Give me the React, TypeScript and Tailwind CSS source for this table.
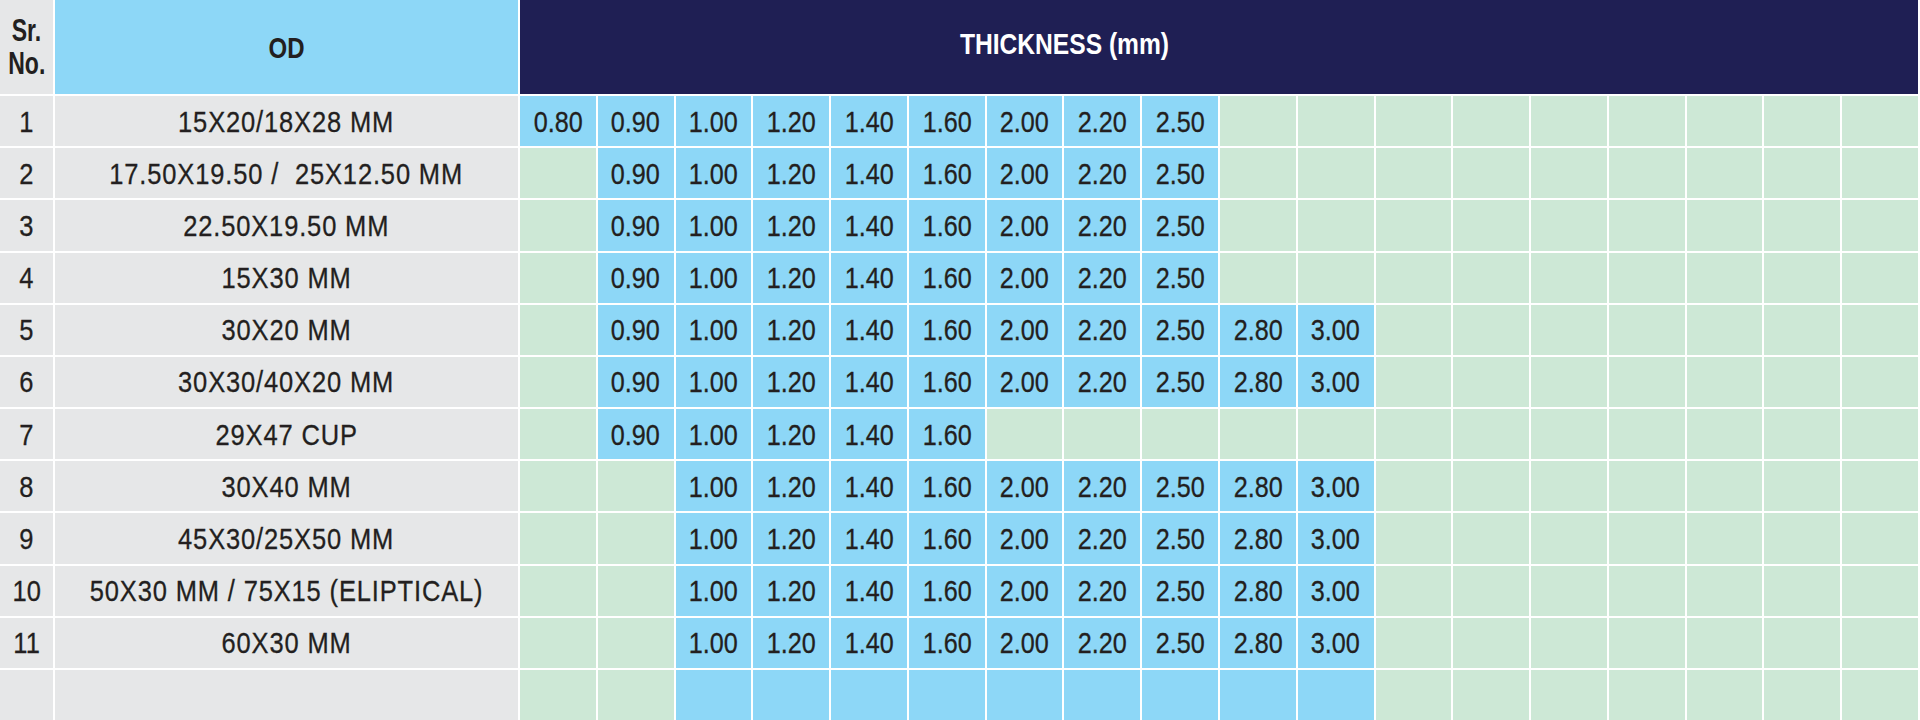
const THICK = ["0.80", "0.90", "1.00", "1.20", "1.40", "1.60", "2.00", "2.20", "2.50", "2.80", "3.00"];

// from / to are 1-based column indexes that hold a size (blue)
const rows = [
  { sr: "1", od: "15X20/18X28 MM", from: 1, to: 9, show: true },
  { sr: "2", od: "17.50X19.50 /\u00a0 25X12.50 MM", from: 2, to: 9, show: true },
  { sr: "3", od: "22.50X19.50 MM", from: 2, to: 9, show: true },
  { sr: "4", od: "15X30 MM", from: 2, to: 9, show: true },
  { sr: "5", od: "30X20 MM", from: 2, to: 11, show: true },
  { sr: "6", od: "30X30/40X20 MM", from: 2, to: 11, show: true },
  { sr: "7", od: "29X47 CUP", from: 2, to: 6, show: true },
  { sr: "8", od: "30X40 MM", from: 3, to: 11, show: true },
  { sr: "9", od: "45X30/25X50 MM", from: 3, to: 11, show: true },
  { sr: "10", od: "50X30 MM / 75X15 (ELIPTICAL)", from: 3, to: 11, show: true },
  { sr: "11", od: "60X30 MM", from: 3, to: 11, show: true },
  { sr: "", od: "", from: 3, to: 11, show: false },
];

const COLS = Array.from({ length: 18 }, (_, i) => i + 1);

// condensed look: Liberation Sans squeezed horizontally
const Narrow = ({ children, className = "" }: { children: React.ReactNode; className?: string }) => (
  <span className={`inline-block whitespace-pre ${className}`}>{children}</span>
);

const App = () => {
  return (
    <div className="w-[1920px] h-[720px] bg-white pr-[2px] font-['Liberation_Sans',Arial,sans-serif] text-[#231f20]">
      <div className="grid h-full grid-cols-[53px_463px_repeat(18,minmax(0,1fr))] grid-rows-[94px_repeat(12,minmax(0,1fr))] gap-[2px]">
        <div className="flex flex-col items-center justify-center bg-[#e6e7e8] text-[32px] font-bold leading-[33px]">
          <Narrow className="scale-x-[0.72]">Sr.</Narrow>
          <Narrow className="scale-x-[0.72]">No.</Narrow>
        </div>
        <div className="flex items-center justify-center bg-[#8dd7f7] text-[30px] font-bold">
          <Narrow className="scale-x-[0.8]">OD</Narrow>
        </div>
        <div className="col-span-18 flex items-center bg-[#1f1f54] pb-[8px] pl-[440px] text-[30px] font-bold text-white">
          <div className="flex w-[208px] justify-center">
            <Narrow className="scale-x-[0.82]">THICKNESS (mm)</Narrow>
          </div>
        </div>

        {rows.map((r, ri) => (
          <div key={ri} className="contents">
            <div className="flex items-center justify-center bg-[#e6e7e8] text-[30px] [-webkit-text-stroke:0.3px_currentcolor]">
              <Narrow className="scale-x-[0.85]">{r.sr}</Narrow>
            </div>
            <div className="flex items-center justify-center bg-[#e6e7e8] text-[30px] [-webkit-text-stroke:0.3px_currentcolor]">
              <Narrow className="scale-x-[0.85] tracking-[1px]">{r.od}</Narrow>
            </div>
            {COLS.map((c) => {
              const on = c >= r.from && c <= r.to;
              return (
                <div
                  key={c}
                  className={
                    on
                      ? "flex items-center justify-center bg-[#8dd7f7] text-[30px] [-webkit-text-stroke:0.3px_currentcolor]"
                      : "bg-[#cde8d6]"
                  }
                >
                  {on && r.show ? <Narrow className="scale-x-[0.84]">{THICK[c - 1]}</Narrow> : null}
                </div>
              );
            })}
          </div>
        ))}
      </div>
    </div>
  );
};

export default App;
